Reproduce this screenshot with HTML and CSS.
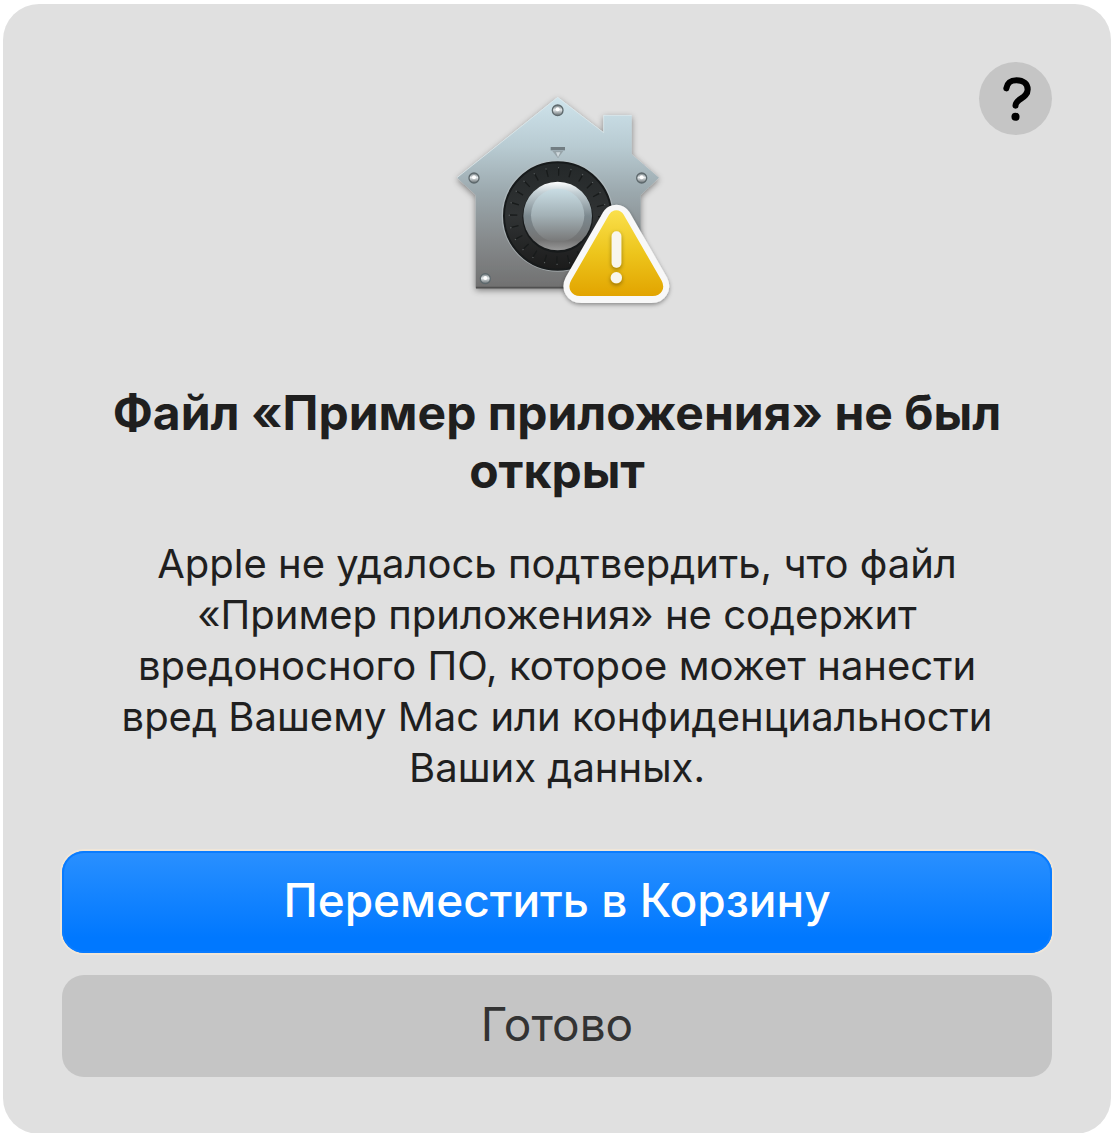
FILE: index.html
```html
<!DOCTYPE html>
<html lang="ru">
<head>
  <meta charset="UTF-8" />
  <meta name="viewport" content="width=device-width, initial-scale=1.0"/>
  <title>Файл не был открыт</title>
  <link rel="stylesheet" href="styles.css">
</head>
<body>
  <main class="dialog" role="alertdialog" aria-labelledby="title" aria-describedby="message">
    <div class="header">
      <svg class="icon" viewBox="-24 -54 750 774" aria-hidden="true">
        <defs>
          <linearGradient id="steel" x1="0" y1="0" x2="0" y2="1">
            <stop offset="0" stop-color="#cfe4ec"/>
            <stop offset="0.25" stop-color="#b9ccd3"/>
            <stop offset="0.5" stop-color="#9ba8ad"/>
            <stop offset="0.75" stop-color="#868a8c"/>
            <stop offset="1" stop-color="#707070"/>
          </linearGradient>
          <linearGradient id="dial" x1="0" y1="0" x2="0" y2="1">
            <stop offset="0" stop-color="#242829"/>
            <stop offset="0.5" stop-color="#303334"/>
            <stop offset="1" stop-color="#1b1b1b"/>
          </linearGradient>
          <linearGradient id="rim" x1="0" y1="0" x2="0" y2="1">
            <stop offset="0" stop-color="#ffffff"/>
            <stop offset="0.15" stop-color="#c5d1d6"/>
            <stop offset="0.5" stop-color="#7c898f"/>
            <stop offset="0.85" stop-color="#737373"/>
            <stop offset="1" stop-color="#999999"/>
          </linearGradient>
          <linearGradient id="knob" x1="0" y1="0" x2="0" y2="1">
            <stop offset="0" stop-color="#c9dde4"/>
            <stop offset="0.5" stop-color="#a3b1b6"/>
            <stop offset="1" stop-color="#777777"/>
          </linearGradient>
          <linearGradient id="yellow" gradientUnits="userSpaceOnUse" x1="0" y1="390" x2="0" y2="648">
            <stop offset="0" stop-color="#fae04c"/>
            <stop offset="0.5" stop-color="#edc51c"/>
            <stop offset="1" stop-color="#e2a400"/>
          </linearGradient>
          <linearGradient id="screw" x1="0" y1="0" x2="0" y2="1">
            <stop offset="0" stop-color="#6c777b"/>
            <stop offset="0.45" stop-color="#e4e9eb"/>
            <stop offset="1" stop-color="#626a6d"/>
          </linearGradient>
          <filter id="shadow" x="-20%" y="-20%" width="140%" height="140%">
            <feDropShadow dx="0" dy="6" stdDeviation="9" flood-color="#000" flood-opacity="0.45"/>
          </filter>
          <filter id="soft" x="-50%" y="-50%" width="200%" height="200%">
            <feDropShadow dx="0" dy="5" stdDeviation="6" flood-color="#000" flood-opacity="0.4"/>
          </filter>
        </defs>

        <!-- house -->
        <path d="M353 52 L491 158 V106 H575 V223 L657 293 L602 345 V625 H107 V345 L51 293 Z" fill="url(#steel)" filter="url(#shadow)"/>
        <path d="M51 293 L353 52 L491 158 V106 H575" fill="none" stroke="#e3f0f4" stroke-width="3" opacity="0.6"/>
        <path d="M108 623 H400" stroke="#505050" stroke-width="5"/>

        <!-- screws -->
        <g stroke="#5d686c" stroke-width="4" fill="url(#screw)">
          <circle cx="353" cy="91" r="16"/>
          <circle cx="102" cy="294" r="15"/>
          <circle cx="605" cy="294" r="15"/>
          <circle cx="136" cy="596" r="15"/>
        </g>
        <g fill="#ffffff">
          <circle cx="353" cy="88" r="6"/>
          <circle cx="102" cy="292" r="6"/>
          <circle cx="605" cy="292" r="6"/>
          <circle cx="136" cy="594" r="6"/>
        </g>

        <!-- dial -->
        <path d="M332 201 H375 V211 H332 Z" fill="#727d82"/>
        <path d="M337 213 H370 L354 235 Z" fill="#97a4a9"/>
        <path d="M348 217 L354 232 L361 217 Z" fill="#d0dade"/>
        <circle cx="353" cy="407" r="168" fill="#b7c0c3" opacity="0.6"/>
        <circle cx="353" cy="408" r="161" fill="url(#dial)" stroke="#171a1b" stroke-width="6"/>
        <circle cx="353" cy="408" r="132" fill="none" stroke="#181b1b" stroke-width="22" stroke-dasharray="4 30.56"/>
        <circle cx="353" cy="408" r="145" fill="none" stroke="#5c6162" stroke-width="4" stroke-dasharray="3 34.96"/>
        <circle cx="353" cy="412" r="106" fill="#171a1b"/>
        <circle cx="353" cy="408" r="103" fill="url(#rim)"/>
        <circle cx="353" cy="406" r="80" fill="url(#knob)"/>

        <!-- warning sign -->
        <path d="M529 420 L640 613 Q645 623 634 623 H424 Q413 623 418 613 Z" fill="#f8f8f8" stroke="#f8f8f8" stroke-width="92" stroke-linejoin="round" filter="url(#soft)"/>
        <path d="M529 416 L643 614 Q648 623 638 623 H420 Q410 623 415 614 Z" fill="url(#yellow)" stroke="url(#yellow)" stroke-width="50" stroke-linejoin="round"/>
        <g fill="#f8f6ee" filter="url(#soft)">
          <rect x="515" y="454" width="29" height="109" rx="14"/>
          <circle cx="529" cy="593" r="17"/>
        </g>
      </svg>
      <button class="help" type="button" aria-label="Справка">
        <svg class="help-mark" viewBox="0 0 72 72" aria-hidden="true">
          <path d="M27 26 C28 20 31 18 37 18 C44 18 48 22 48 27 C48 36 36 36 36 43" fill="none" stroke="#000" stroke-width="6" stroke-linecap="round" stroke-linejoin="round"/>
          <circle cx="36" cy="54" r="4"/>
        </svg>
      </button>
    </div>

    <h1 class="title" id="title">Файл «Пример приложения» не был открыт</h1>
    <p class="message" id="message">Apple не удалось подтвердить, что файл «Пример приложения» не содержит вредоносного ПО, которое может нанести вред Вашему Mac или конфиденциальности Ваших данных.</p>

    <div class="buttons">
      <button class="button primary" type="button">Переместить в Корзину</button>
      <button class="button" type="button">Готово</button>
    </div>
  </main>
</body>
</html>
```
FILE: styles.css
```css
* {
  box-sizing: border-box;
}

body {
  margin: 0;
  padding: 4px 0 0 3px;
  font-family: Inter, "Liberation Sans", sans-serif;
  background: #ffffff;
}

.dialog {
  padding: 58px 59px 57px;
  border-radius: 36px;
  background: #e0e0e0;
  color: #1f1f1f;
  text-align: center;
}

.header {
  display: grid;
  grid-template-columns: 1fr auto 1fr;
  align-items: start;
}

.icon {
  grid-column: 2;
  display: block;
  width: 250px;
  height: 258px;
}

.help {
  justify-self: end;
  width: 73px;
  height: 73px;
  padding: 0;
  border: none;
  border-radius: 50%;
  background: #c5c5c5;
  cursor: pointer;
}

.help-mark {
  display: block;
  width: 100%;
}

.title {
  margin: 64px 0 38px;
  padding: 0 24px;
  font-size: 48px;
  font-weight: 700;
  line-height: 58px;
}

.message {
  margin: 0 0 58px;
  padding: 0 40px;
  font-size: 40px;
  line-height: 51px;
}

.buttons {
  display: grid;
  gap: 22px;
}

.button {
  height: 102px;
  padding: 0 20px 4px;
  border: none;
  border-radius: 22px;
  background: #c5c5c5;
  color: #333333;
  font-family: inherit;
  font-size: 46px;
  cursor: pointer;
}

.primary {
  background: linear-gradient(#2a90ff, #0078ff 85%);
  box-shadow: 0 0 0 2px #f0e6d8, inset 0 0 0 2px #0a7cff;
  color: #ffffff;
  font-weight: 500;
}

.button:active,
.help:active {
  filter: brightness(0.9);
}
```
